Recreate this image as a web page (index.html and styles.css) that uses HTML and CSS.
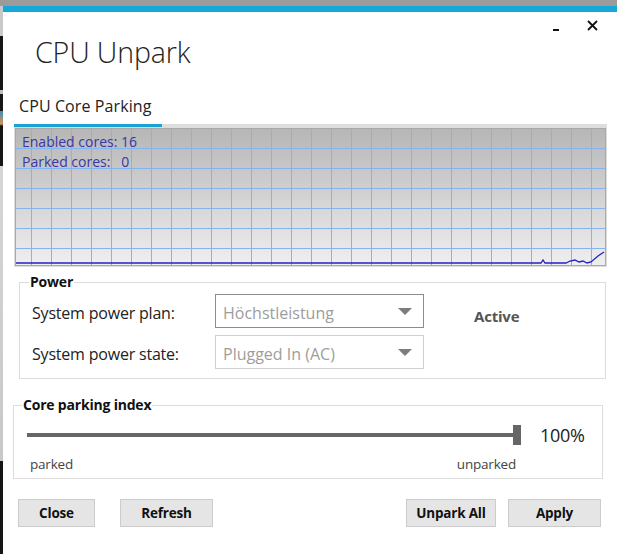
FILE: index.html
```html
<!DOCTYPE html>
<html>
<head>
<meta charset="utf-8">
<link rel="stylesheet" href="styles.css">
</head>
<body>
<div class="desk">
  <div class="strip"></div>
  <div class="window">
    <div class="header">
      <h1 class="title">CPU Unpark</h1>
      <div class="controls">
        <span class="min"></span>
        <svg class="close" width="11" height="11" viewBox="0 0 11 11"><path d="M1 1 L10 10 M10 1 L1 10" stroke="#111" stroke-width="1.8" fill="none"/></svg>
      </div>
    </div>
    <div class="tabs">
      <div class="tab">CPU Core Parking</div>
    </div>
    <div class="tabline"><div class="tabsel"></div></div>
    <div class="chart">
      <svg class="plot" width="591" height="138" viewBox="0 0 591 138">
        <defs>
          <linearGradient id="bg" x1="0" y1="0" x2="0" y2="1">
            <stop offset="0" stop-color="#b6b6b6"/>
            <stop offset="1" stop-color="#efefef"/>
          </linearGradient>
          <pattern id="grid" patternUnits="userSpaceOnUse" x="0" y="0" width="20" height="20">
            <rect x="16" y="0" width="1" height="20" fill="#86b2ee"/>
            <rect x="0" y="0" width="20" height="1" fill="#86b2ee"/>
          </pattern>
        </defs>
        <rect x="0" y="0" width="591" height="138" fill="url(#bg)"/>
        <rect x="0" y="0" width="591" height="138" fill="url(#grid)"/>
        <rect x="0.5" y="0.5" width="590" height="137" fill="none" stroke="#a9a9a9"/>
        <polyline points="1,135 526,135 528,132 530,135 551,135 555,133 560,132 564,134 568,133 572,135 576,134 583,128 589,124" fill="none" stroke="#2222c8" stroke-width="1.3"/>
      </svg>
      <div class="stats">
        <div>Enabled cores: 16</div>
        <div>Parked cores:&nbsp;&nbsp; 0</div>
      </div>
    </div>
    <fieldset class="group power">
      <legend>Power</legend>
      <div class="prow">
        <span class="plabel">System power plan:</span>
        <div class="combo active-combo"><span>Höchstleistung</span><i class="arrow"></i></div>
        <span class="active">Active</span>
      </div>
      <div class="prow">
        <span class="plabel">System power state:</span>
        <div class="combo"><span>Plugged In (AC)</span><i class="arrow"></i></div>
      </div>
    </fieldset>
    <fieldset class="group core">
      <legend>Core parking index</legend>
      <div class="slider-row">
        <div class="track"><div class="thumb"></div></div>
        <span class="pct">100%</span>
      </div>
      <div class="ticks"><span>parked</span><span>unparked</span></div>
    </fieldset>
    <div class="buttons">
      <div class="bgroup">
        <button class="btn b-close">Close</button>
        <button class="btn b-refresh">Refresh</button>
      </div>
      <div class="bgroup">
        <button class="btn b-unpark">Unpark All</button>
        <button class="btn b-apply">Apply</button>
      </div>
    </div>
  </div>
</div>
</body>
</html>
```
FILE: styles.css
```css
html, body {
  margin: 0;
  padding: 0;
  width: 617px;
  height: 554px;
  overflow: hidden;
  background: #9b9b9b;
  font-family: "Open Sans", "Noto Sans", sans-serif;
}
.desk {
  display: flex;
  width: 617px;
  height: 554px;
  padding-top: 6px;
  box-sizing: border-box;
}
.strip {
  width: 3px;
  flex: none;
  background: linear-gradient(to bottom,
    #c9c9c9 0px, #c9c9c9 30px,
    #161616 30px, #161616 84px,
    #bdbdbd 84px, #bdbdbd 88px,
    #161616 88px, #161616 105px,
    #3b8fc0 105px, #d89050 118px,
    #161616 120px, #161616 160px,
    #d6d6d6 160px, #c8c8c8 455px,
    #141414 455px, #141414 554px);
}
.window {
  flex: 1;
  background: #fff;
  border-top: 6px solid #17a8da;
}
.header {
  display: flex;
  justify-content: space-between;
  align-items: flex-start;
  height: 70px;
}
.title {
  margin: 22px 0 0 32px;
  font-weight: 300;
  font-size: 28.5px;
  line-height: 36px;
  color: #222;
  letter-spacing: -0.1px;
}
.controls {
  display: flex;
  align-items: center;
  margin: 8px 19px 0 0;
  gap: 28px;
}
.min {
  display: block;
  width: 6px;
  height: 2px;
  background: #111;
  margin-top: 8px;
}
.close { display: block; }
.tabs {
  padding-left: 16px;
  height: 42px;
}
.tab {
  font-size: 16px;
  line-height: 20px;
  padding-top: 14px;
  color: #222;
  letter-spacing: 0.1px;
}
.tabline {
  margin-left: 11px;
  width: 593px;
  height: 3px;
  background: #dedede;
}
.tabsel {
  width: 148px;
  height: 3px;
  background: #1aa3d2;
}
.chart {
  margin-left: 11px;
  width: 593px;
  height: 140px;
  box-sizing: border-box;
  border: 1px solid #dcdcdc;
  position: relative;
}
.stats {
  padding: 4px 0 0 7px;
  font-size: 14px;
  line-height: 20px;
  color: #3737a6;
  position: relative;
}
.plot {
  position: absolute;
  left: 0;
  top: 0;
  display: block;
}
.group {
  border: 1px solid #dcdcdc;
  margin: 0;
  padding: 0;
}
.group legend {
  font-weight: 700;
  font-size: 14px;
  line-height: 14px;
  color: #111;
  padding: 0 1px;
  letter-spacing: -0.2px;
}
.power {
  margin: 8px 0 0 16px;
  width: 587px;
  height: 104px;
  box-sizing: border-box;
  padding: 5px 0 0 12px;
}
.power legend { margin-left: -3px; }
.prow {
  display: flex;
  align-items: center;
  height: 34px;
  margin-bottom: 7px;
}
.plabel {
  width: 183px;
  font-size: 16px;
  color: #222;
  letter-spacing: -0.2px;
  padding-top: 4px;
}
.combo {
  width: 209px;
  height: 34px;
  box-sizing: border-box;
  border: 1px solid #cfcfcf;
  display: flex;
  align-items: center;
  justify-content: space-between;
  padding: 0 11px 0 7px;
  font-size: 16px;
  color: #9d9d9d;
}
.combo span { padding-top: 3px; }
.active-combo { border-color: #8c8c8c; }
.arrow {
  width: 0;
  height: 0;
  border-left: 7px solid transparent;
  border-right: 7px solid transparent;
  border-top: 7px solid #7d7d7d;
}
.active {
  margin-left: 50px;
  font-size: 15px;
  font-weight: 700;
  color: #555;
  padding-top: 9px;
  letter-spacing: -0.2px;
}
.core {
  margin: 19px 0 0 10px;
  width: 590px;
  height: 81px;
  box-sizing: border-box;
  padding: 0 0 0 13px;
}
.core legend { margin-left: -5px; }
.slider-row {
  display: flex;
  align-items: center;
  height: 28px;
  margin-top: 9px;
}
.track {
  width: 494px;
  height: 4px;
  background: #666;
  position: relative;
}
.thumb {
  position: absolute;
  right: 0;
  top: -8px;
  width: 8px;
  height: 20px;
  background: #666;
}
.pct {
  margin-left: 19px;
  font-size: 18px;
  color: #222;
  letter-spacing: -0.3px;
}
.ticks {
  display: flex;
  justify-content: space-between;
  width: 489px;
  padding-left: 3px;
  box-sizing: border-box;
  font-size: 13.5px;
  color: #444;
  margin-top: 6px;
  letter-spacing: -0.2px;
}
.buttons {
  display: flex;
  justify-content: space-between;
  margin: 20px 0 0 15px;
  width: 583px;
}
.bgroup {
  display: flex;
  gap: 12px;
}
.btn {
  height: 28px;
  box-sizing: border-box;
  border: 1px solid #cccccc;
  background: #e5e5e5;
  font-family: "Open Sans", "Noto Sans", sans-serif;
  font-weight: 700;
  font-size: 13.5px;
  color: #111;
  padding: 0;
  letter-spacing: -0.2px;
}
.b-close { width: 77px; }
.b-refresh { width: 93px; margin-left: 13px; }
.b-unpark { width: 90px; }
.b-apply { width: 93px; }
```
